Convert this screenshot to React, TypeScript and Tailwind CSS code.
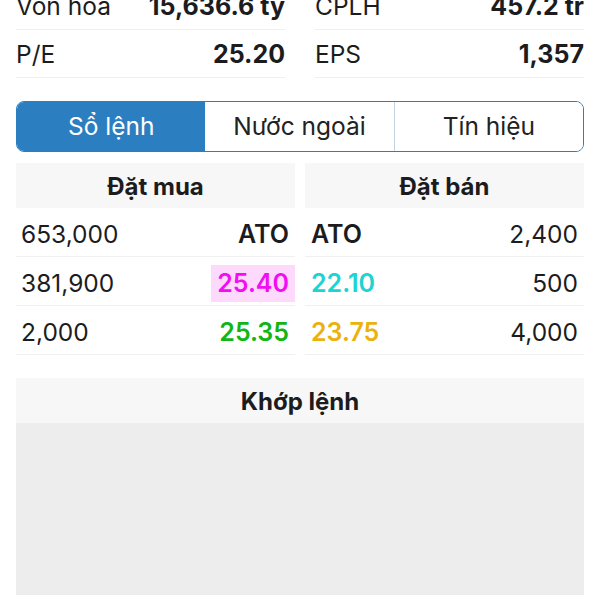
import React from 'react'

type Stat = { label: string; value: string }

const stats: Stat[][] = [
  [
    { label: 'Vốn hóa', value: '15,636.6 tỷ' },
    { label: 'P/E', value: '25.20' },
  ],
  [
    { label: 'CPLH', value: '457.2 tr' },
    { label: 'EPS', value: '1,357' },
  ],
]

type Level = { vol: string; price: string; color: string; bold?: boolean; hl?: boolean }

const bids: Level[] = [
  { vol: '653,000', price: 'ATO', color: 'text-[#1c1c1e]', bold: true },
  { vol: '381,900', price: '25.40', color: 'text-[#f20df2]', hl: true },
  { vol: '2,000', price: '25.35', color: 'text-[#12b512]' },
]

const asks: Level[] = [
  { vol: '2,400', price: 'ATO', color: 'text-[#1c1c1e]', bold: true },
  { vol: '500', price: '22.10', color: 'text-[#20d3d3]' },
  { vol: '4,000', price: '23.75', color: 'text-[#ebb10d]' },
]

const tabs = ['Sổ lệnh', 'Nước ngoài', 'Tín hiệu']

function StatColumn({ items }: { items: Stat[] }) {
  return (
    <div className="flex flex-col">
      {items.map((s) => (
        <div
          key={s.label}
          className="flex h-[48px] items-center justify-between border-b border-[#efefef] pt-[2px]"
        >
          <span className="text-[#1c1c1e]">{s.label}</span>
          <span className="text-[25px] font-bold text-[#1c1c1e]">{s.value}</span>
        </div>
      ))}
    </div>
  )
}

function BookSide({ title, rows, side }: { title: string; rows: Level[]; side: 'bid' | 'ask' }) {
  return (
    <div className="flex flex-col">
      <div className="flex h-[45px] items-center justify-center bg-[#f7f7f7] pt-[2px] text-[24px] font-bold text-[#1c1c1e]">
        {title}
      </div>
      {rows.map((r) => (
        <div key={r.vol} className="flex h-[49px] items-center justify-between border-b border-[#f0f0f0] pt-[5px]">
          {side === 'bid' ? (
            <>
              <span className="pl-[5px] text-[#1c1c1e]">{r.vol}</span>
              <span
                className={`flex h-[37px] items-center px-[6px] text-[25px] font-semibold ${r.color} ${
                  r.hl ? 'bg-[#fddafb]' : ''
                } ${r.bold ? 'font-bold' : ''}`}
              >
                {r.price}
              </span>
            </>
          ) : (
            <>
              <span
                className={`flex h-[37px] items-center px-[6px] text-[25px] font-semibold ${r.color} ${
                  r.bold ? 'font-bold' : ''
                }`}
              >
                {r.price}
              </span>
              <span className="pr-[6px] text-[#1c1c1e]">{r.vol}</span>
            </>
          )}
        </div>
      ))}
    </div>
  )
}

export default function App() {
  return (
    <div className="h-[600px] w-[600px] overflow-hidden bg-white font-['Inter','Noto_Sans',sans-serif] text-[24.5px]">
      <div className="-mt-[18px] px-[16px]">
        {/* Stats */}
        <div className="grid grid-cols-2 gap-x-[30px]">
          <StatColumn items={stats[0]} />
          <StatColumn items={stats[1]} />
        </div>

        {/* Segmented tabs */}
        <div className="mt-[23px] flex h-[51px] overflow-hidden rounded-[8px] border border-[#2b7ec0]">
          {tabs.map((t, i) => (
            <div
              key={t}
              className={`flex flex-1 items-center justify-center ${
                i === 0 ? 'bg-[#2b7ec0] text-white' : 'bg-white text-[#222]'
              } ${i === 2 ? 'border-l border-[#c3d3e2]' : ''}`}
            >
              {t}
            </div>
          ))}
        </div>

        {/* Order book */}
        <div className="mt-[11px] grid grid-cols-2 gap-x-[10px]">
          <BookSide title="Đặt mua" rows={bids} side="bid" />
          <BookSide title="Đặt bán" rows={asks} side="ask" />
        </div>

        {/* Matched orders */}
        <div className="mt-[23px] flex flex-col">
          <div className="flex h-[45px] items-center justify-center bg-[#f7f7f7] pt-[2px] text-[24px] font-bold text-[#1c1c1e]">
            Khớp lệnh
          </div>
          <div className="h-[172px] bg-[#ededed]" />
        </div>
      </div>
    </div>
  )
}
